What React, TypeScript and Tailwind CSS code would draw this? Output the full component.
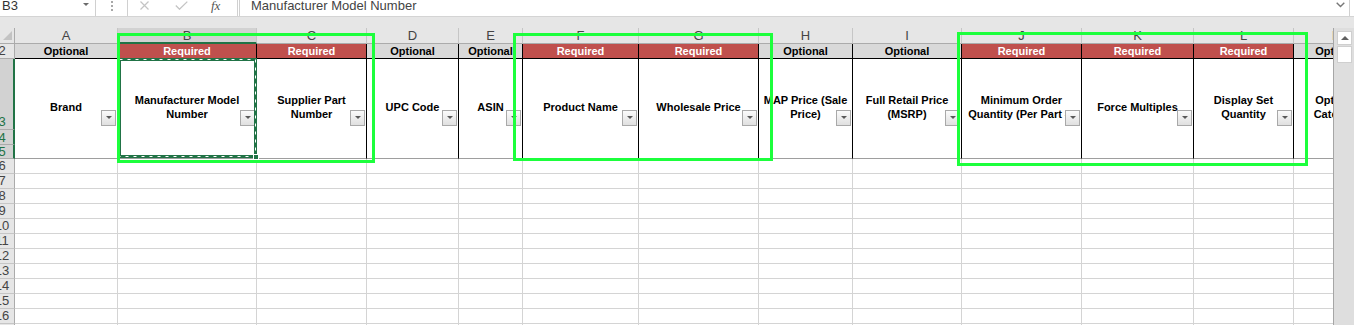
import React from 'react';

type Col = { key: string; w: string; req: boolean; text: string; selected?: boolean };

const COLS: Col[] = [
  { key: 'A', w: 'w-[103px]', req: false, text: 'Brand' },
  { key: 'B', w: 'w-[139px]', req: true, text: 'Manufacturer Model Number', selected: true },
  { key: 'C', w: 'w-[110px]', req: true, text: 'Supplier Part Number' },
  { key: 'D', w: 'w-[92px]', req: false, text: 'UPC Code' },
  { key: 'E', w: 'w-[64px]', req: false, text: 'ASIN' },
  { key: 'F', w: 'w-[116px]', req: true, text: 'Product Name' },
  { key: 'G', w: 'w-[120px]', req: true, text: 'Wholesale Price' },
  { key: 'H', w: 'w-[94px]', req: false, text: 'MAP Price (Sale Price)' },
  { key: 'I', w: 'w-[109px]', req: false, text: 'Full Retail Price (MSRP)' },
  { key: 'J', w: 'w-[120px]', req: true, text: 'Minimum Order Quantity (Per Part #)' },
  { key: 'K', w: 'w-[112px]', req: true, text: 'Force Multiples' },
  { key: 'L', w: 'w-[100px]', req: true, text: 'Display Set Quantity' },
  { key: 'M', w: 'w-[88px]', req: false, text: 'Optional Category' },
];

const EMPTY_ROWS = [6, 7, 8, 9, 10, 11, 12, 13, 14, 15, 16, 17];

function RowNum({ n }: { n: number }) {
  return <span className="block w-[26px] shrink-0 -ml-[11px] text-center">{n}</span>;
}

function FilterBtn() {
  return (
    <div className="absolute right-[1px] top-[51px] w-[15px] h-[16px] border border-[#a9a9a9] bg-linear-to-b from-[#fbfbfb] to-[#e0e0e0] flex items-center justify-center">
      <div className="w-0 h-0 border-x-[3px] border-t-[3px] border-x-transparent border-t-[#5a5a5a] -mt-[1px]" />
    </div>
  );
}

export default function App() {
  return (
    <div className="relative w-[1354px] h-[325px] overflow-hidden bg-white font-['Liberation_Sans',Arial,sans-serif]">
      {/* Formula bar */}
      <div className="flex h-[17px] border-b border-[#d4d4d4] bg-white text-[13px] text-[#333]">
        <div className="w-[96px] shrink-0 border-r border-[#d0d0d0] flex items-start justify-between pl-[2px] pr-[6px]">
          <span className="leading-[12px]">B3</span>
          <div className="mt-[3px] w-0 h-0 border-x-[3.5px] border-t-[3.5px] border-x-transparent border-t-[#6b6b6b]" />
        </div>
        <div className="w-[31px] shrink-0 flex flex-col items-center gap-[2px] pt-[1px] pl-[1px]">
          <div className="w-[2px] h-[2px] bg-[#a8a8a8]" />
          <div className="w-[2px] h-[2px] bg-[#a8a8a8]" />
          <div className="w-[2px] h-[2px] bg-[#a8a8a8]" />
        </div>
        <div className="w-[111px] shrink-0 border-x border-[#d0d0d0] flex items-start">
          <svg className="ml-[12px] mt-[1px]" width="9" height="9" viewBox="0 0 9 9">
            <path d="M0.5 0.5 L8.5 8.5 M8.5 0.5 L0.5 8.5" stroke="#c4c4c4" strokeWidth="1.2" fill="none" />
          </svg>
          <svg className="ml-[26px] mt-[1px]" width="13" height="9" viewBox="0 0 13 9">
            <path d="M0.8 4.5 L4.5 8.2 L12.3 0.6" stroke="#c4c4c4" strokeWidth="1.3" fill="none" />
          </svg>
          <span className="ml-[23px] font-['Liberation_Serif',serif] italic text-[13px] leading-[12px] text-[#555]">fx</span>
        </div>
        <div className="w-[1px] shrink-0" />
        <div className="w-[1111px] shrink-0 border-x border-[#d0d0d0] flex items-start justify-between pl-[11px] pr-[4px]">
          <span className="leading-[12px] text-[#444]">Manufacturer Model Number</span>
          <svg className="mt-[2px]" width="9" height="6" viewBox="0 0 9 6">
            <path d="M0.7 0.7 L4.5 4.5 L8.3 0.7" stroke="#777" strokeWidth="1.4" fill="none" />
          </svg>
        </div>
      </div>

      <div className="flex">
        {/* Grid */}
        <div className="w-[1333px] shrink-0 overflow-hidden">
          <div className="h-[11px] bg-[#e6e6e6]" />

          {/* Column headers */}
          <div className="flex h-[16px] bg-[#e6e6e6] text-[13px] leading-[15px] text-[#444]">
            <div className="relative w-[15px] shrink-0 border-r border-b border-[#ababab]">
              <div className="absolute right-[2px] top-[3px] w-0 h-0 border-l-[9px] border-l-transparent border-b-[9px] border-b-[#c3c3c3]" />
            </div>
            {COLS.map((c) => (
              <div
                key={c.key}
                className={`${c.w} shrink-0 border-r border-[#c6c6c6] text-center ${
                  c.selected ? 'bg-[#d2d2d2] border-b-2 border-b-[#217346]' : 'border-b border-b-[#ababab]'
                }`}
              >
                {c.key}
              </div>
            ))}
          </div>

          {/* Row 2 */}
          <div className="flex h-[15px] text-[11px] leading-[14px] font-bold">
            <div className="w-[15px] shrink-0 overflow-hidden flex items-center bg-[#e6e6e6] border-r border-[#ababab] border-b border-b-[#ababab] text-[13px] font-normal text-[#444]">
              <RowNum n={2} />
            </div>
            {COLS.map((c) => (
              <div
                key={c.key}
                className={`${c.w} shrink-0 border-r border-b border-black text-center whitespace-nowrap overflow-hidden ${
                  c.req ? 'bg-[#c0504d] text-white' : 'bg-[#d9d9d9] text-black'
                }`}
              >
                {c.req ? 'Required' : 'Optional'}
              </div>
            ))}
          </div>

          {/* Rows 3-5 merged header */}
          <div className="flex h-[100px]">
            <div className="w-[15px] shrink-0 flex flex-col text-[13px] leading-[15px] text-[#217346]">
              <div className="h-[71px] overflow-hidden flex items-end bg-[#d2d2d2] border-r-2 border-r-[#217346] border-b border-b-[#ababab]">
                <RowNum n={3} />
              </div>
              <div className="h-[15px] overflow-hidden flex items-center bg-[#d2d2d2] border-r-2 border-r-[#217346] border-b border-b-[#ababab]">
                <RowNum n={4} />
              </div>
              <div className="h-[14px] overflow-hidden flex items-center bg-[#d2d2d2] border-r-2 border-r-[#217346] border-b border-b-[#ababab]">
                <RowNum n={5} />
              </div>
            </div>
            {COLS.map((c) => (
              <div
                key={c.key}
                className={`${c.w} shrink-0 relative bg-white border-r border-black border-b border-b-[#9e9e9e] flex items-center justify-center text-center px-[2px] pb-[3px] text-[11px] leading-[14px] font-bold text-black`}
              >
                <span>{c.text}</span>
                <FilterBtn />
              </div>
            ))}
          </div>

          {/* Empty rows */}
          {EMPTY_ROWS.map((r) => (
            <div key={r} className="flex h-[15px]">
              <div className="w-[15px] shrink-0 overflow-hidden flex items-center bg-[#e6e6e6] border-r border-[#ababab] border-b border-b-[#c6c6c6] text-[13px] leading-[14px] text-[#444]">
                <RowNum n={r} />
              </div>
              {COLS.map((c) => (
                <div key={c.key} className={`${c.w} shrink-0 border-r border-b border-[#d4d4d4]`} />
              ))}
            </div>
          ))}
        </div>

        {/* Vertical scrollbar */}
        <div className="w-[21px] shrink-0 flex flex-col">
          <div className="h-[11px] bg-[#e6e6e6]" />
          <div className="h-[400px] border-l border-[#a6a6a6] bg-[#dedede] pt-[3px] pl-[3px]">
            <div className="w-[15px] h-[14px] bg-white border border-[#cfcfcf] flex items-center justify-center">
              <div className="w-0 h-0 border-x-[4px] border-b-[4px] border-x-transparent border-b-[#606060]" />
            </div>
            <div className="mt-[1px] w-[15px] h-[17px] bg-white border border-[#cfcfcf]" />
          </div>
        </div>
      </div>

      {/* Copy marquee on B3 */}
      <svg className="absolute left-[118px] top-[58px]" width="139" height="100">
        <rect x="1.5" y="1.5" width="136" height="97" fill="none" stroke="#217346" strokeWidth="3" />
        <rect x="1.5" y="1.5" width="136" height="97" fill="none" stroke="#ffffff" strokeWidth="1" strokeDasharray="3 5" />
      </svg>
      <div className="absolute left-[253px] top-[154px] w-[6px] h-[6px] bg-[#217346] border border-white" />

      {/* Annotation boxes */}
      <div className="absolute left-[117px] top-[33px] w-[258px] h-[130px] border-[3px] border-[#1cff3c]" />
      <div className="absolute left-[513px] top-[33px] w-[260px] h-[128px] border-[3px] border-[#1cff3c]" />
      <div className="absolute left-[957px] top-[32px] w-[351px] h-[134px] border-[3px] border-[#1cff3c]" />
    </div>
  );
}
